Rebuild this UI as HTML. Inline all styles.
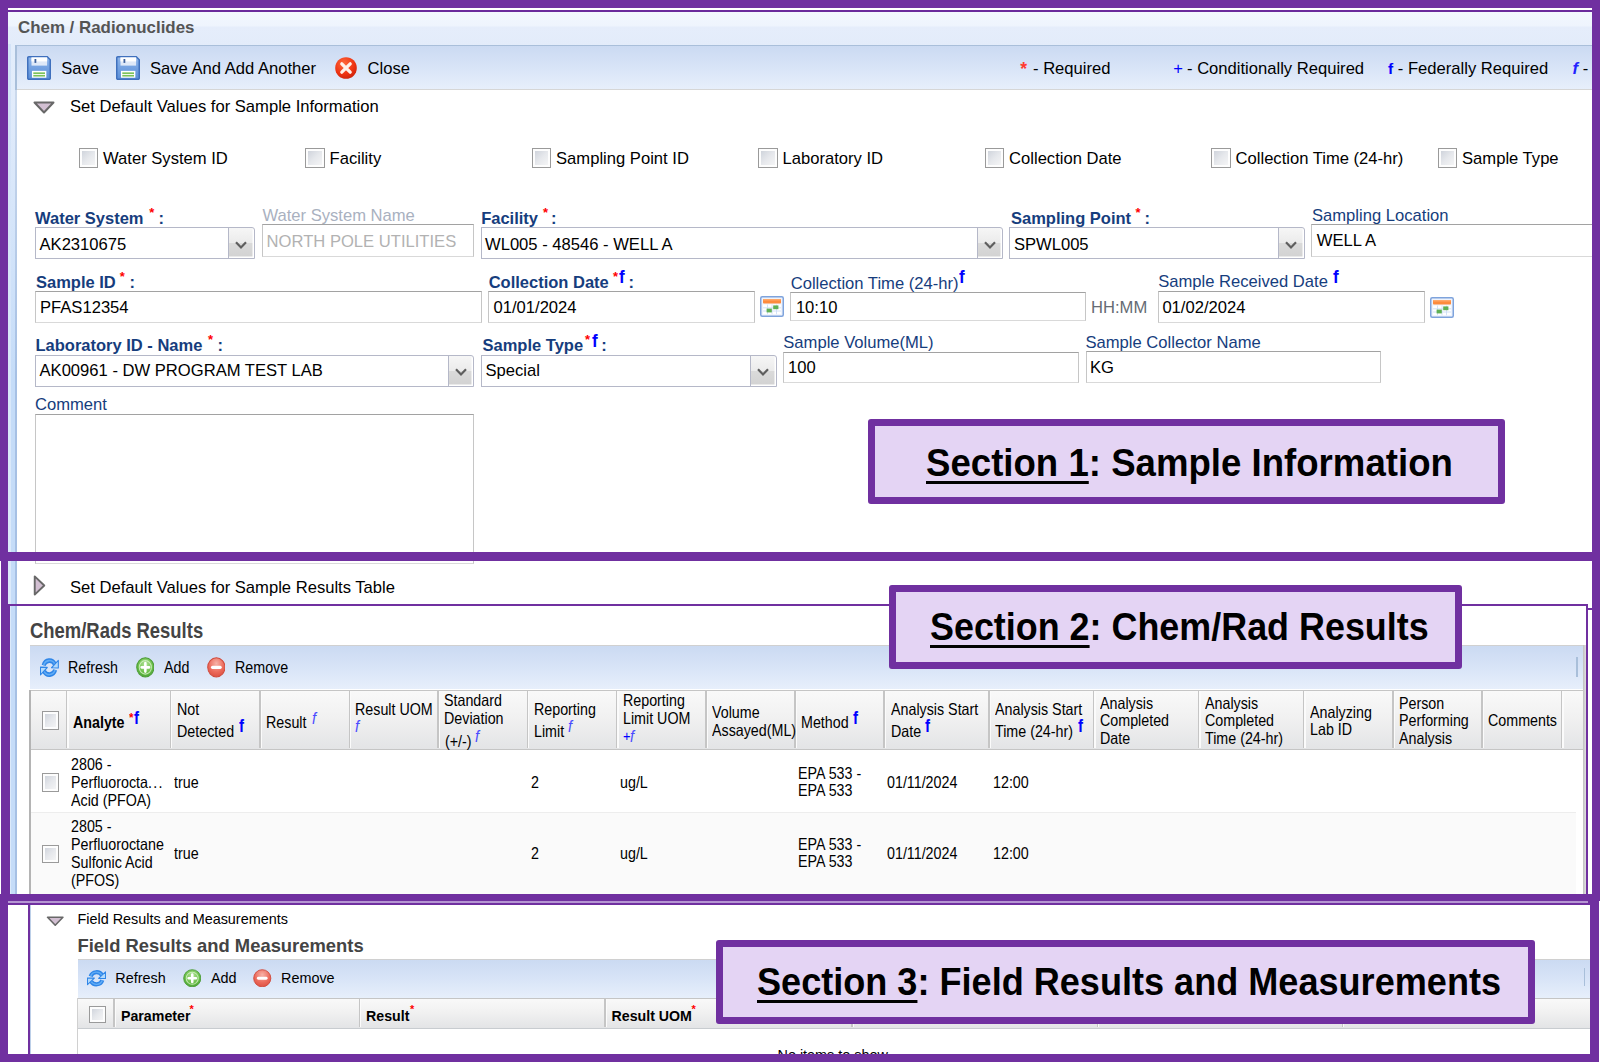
<!DOCTYPE html>
<html lang="en"><head><meta charset="utf-8"><title>Chem / Radionuclides</title><style>
html,body{margin:0;padding:0;background:#fff}
body{width:1600px;height:1062px;position:relative;overflow:hidden;font-family:"Liberation Sans",sans-serif}
.t{position:absolute;white-space:nowrap;font-family:"Liberation Sans",sans-serif}
.r{position:absolute}
.cb{position:absolute;box-sizing:border-box;border:1.500px solid #9a9a9a;background:linear-gradient(135deg,#c9ced7 0,#e6e8ec 50%,#f8f8f8 100%);box-shadow:inset 0 0 0 2px #fdfdfd}
.f{position:absolute;box-sizing:border-box;background:#fff;border:1.500px solid #c6c6c6;border-top-color:#a2a2a2;border-bottom-color:#d9d9d9}
.fc{border-color:#b5b8c8}
.trg{position:absolute;box-sizing:border-box;border:1.500px solid #b5b8c8;border-radius:0 3px 0 0;background:linear-gradient(#f6f6f6 0,#ebebeb 49%,#dadada 51%,#d2d2d2 100%);box-shadow:inset -1.500px -1.500px 0 #fff}
.ul{text-decoration:underline;text-decoration-thickness:3px;text-underline-offset:5px;text-decoration-skip-ink:none}
</style></head><body>
<div class="r" style="left:8.00px;top:12.00px;width:1584.00px;height:33.00px;background:linear-gradient(#f2f7fe 0,#eef4fd 42%,#e5edfb 46%,#e3ecfa 100%);"></div>
<div class="t " style="left:18.00px;top:20px;font-size:16.9px;line-height:16.9px;font-weight:bold;color:#555;">Chem / Radionuclides</div>
<div class="r" style="left:7.50px;top:44.00px;width:8.00px;height:518.00px;background:linear-gradient(#e3edfb 0,#e2ecfb 10%,#c5dcf8 65%,#c5dcf8 100%);"></div>
<div class="r" style="left:7.50px;top:44.00px;width:3.00px;height:518.00px;background:linear-gradient(#d3e3f8 0,#dceafa 100%);"></div>
<div class="r" style="left:15.30px;top:90.00px;width:1.50px;height:472.00px;background:linear-gradient(#cbd9ec 0,#a6c0e4 60%,#a6c0e4 100%);"></div>
<div class="r" style="left:8.00px;top:562.00px;width:7.50px;height:339.00px;background:#c5dcf8;"></div>
<div class="r" style="left:8.00px;top:562.00px;width:3.00px;height:339.00px;background:#dceafa;"></div>
<div class="r" style="left:15.30px;top:562.00px;width:1.50px;height:339.00px;background:#a6c0e4;"></div>
<div class="r" style="left:15.00px;top:44.50px;width:1577.00px;height:45.70px;background:#a9bfda;"></div>
<div class="r" style="left:16.50px;top:46.00px;width:1575.50px;height:42.70px;background:linear-gradient(#cbdaf2 0,#d8e4f7 50%,#e7effb 100%);"></div>
<div class="r" style="left:16.50px;top:88.70px;width:1575.50px;height:1.60px;background:#d6d6d6;"></div>
<svg class="r" style="left:27.2px;top:56px" width="24" height="24" viewBox="0 0 16 16">
<defs><linearGradient id="sv27" x1="0" y1="0" x2="0" y2="1"><stop offset="0" stop-color="#8db4ea"/><stop offset="1" stop-color="#5a8fd8"/></linearGradient></defs>
<path d="M1.2 0.5h12.3l2 2v12.3a.7.7 0 0 1-.7.7H1.2a.7.7 0 0 1-.7-.7V1.2a.7.7 0 0 1 .7-.7z" fill="url(#sv27)" stroke="#3f70bd" stroke-width="1"/>
<rect x="3" y="1" width="10.400" height="5.400" fill="#dfe9f8"/>
<rect x="3" y="1" width="10.400" height="2.600" fill="#ffffff"/>
<rect x="5" y="2" width="1.200" height="2.600" fill="#3b5f9c"/>
<rect x="3.300" y="9.900" width="9.600" height="4.600" fill="#ffffff"/>
<rect x="4.200" y="10.900" width="7.800" height="1.100" fill="#7cc25a"/>
<rect x="4.200" y="12.600" width="7.800" height="1.100" fill="#7cc25a"/>
</svg>
<div class="t " style="left:61.20px;top:61px;font-size:16.6px;line-height:16.6px;color:#000;">Save</div>
<svg class="r" style="left:116.4px;top:56px" width="24" height="24" viewBox="0 0 16 16">
<defs><linearGradient id="sv116" x1="0" y1="0" x2="0" y2="1"><stop offset="0" stop-color="#8db4ea"/><stop offset="1" stop-color="#5a8fd8"/></linearGradient></defs>
<path d="M1.2 0.5h12.3l2 2v12.3a.7.7 0 0 1-.7.7H1.2a.7.7 0 0 1-.7-.7V1.2a.7.7 0 0 1 .7-.7z" fill="url(#sv116)" stroke="#3f70bd" stroke-width="1"/>
<rect x="3" y="1" width="10.400" height="5.400" fill="#dfe9f8"/>
<rect x="3" y="1" width="10.400" height="2.600" fill="#ffffff"/>
<rect x="5" y="2" width="1.200" height="2.600" fill="#3b5f9c"/>
<rect x="3.300" y="9.900" width="9.600" height="4.600" fill="#ffffff"/>
<rect x="4.200" y="10.900" width="7.800" height="1.100" fill="#7cc25a"/>
<rect x="4.200" y="12.600" width="7.800" height="1.100" fill="#7cc25a"/>
</svg>
<div class="t " style="left:150.00px;top:61px;font-size:16.6px;line-height:16.6px;color:#000;">Save And Add Another</div>
<svg class="r" style="left:334.1px;top:56.2px" width="24" height="24" viewBox="-12 -12 24 24">
<defs><radialGradient id="cl" cx="0.4" cy="0.3" r="0.8"><stop offset="0" stop-color="#ff6a3c"/><stop offset="0.6" stop-color="#ee3312"/><stop offset="1" stop-color="#c4200a"/></radialGradient></defs>
<circle r="10.8" fill="url(#cl)"/>
<path d="M-4.200 -4.200L4.200 4.200M4.200 -4.200L-4.200 4.200" stroke="#fff1ea" stroke-width="3.300" stroke-linecap="round"/>
</svg>
<div class="t " style="left:367.60px;top:61px;font-size:16.6px;line-height:16.6px;color:#000;">Close</div>
<div class="t " style="left:1020.30px;top:61px;font-size:17.5px;line-height:17.5px;font-weight:bold;color:#ff3b30;">*</div>
<div class="t " style="left:1033.00px;top:61px;font-size:16.6px;line-height:16.6px;color:#000;">- Required</div>
<div class="t " style="left:1173.20px;top:61px;font-size:16.6px;line-height:16.6px;color:#0000ff;">+</div>
<div class="t " style="left:1187.00px;top:61px;font-size:16.6px;line-height:16.6px;color:#000;">- Conditionally Required</div>
<div class="t " style="left:1388.00px;top:61px;font-size:15.5px;line-height:15.5px;font-weight:bold;color:#0000ff;">f</div>
<div class="t " style="left:1397.80px;top:61px;font-size:16.6px;line-height:16.6px;color:#000;">- Federally Required</div>
<div class="t " style="left:1572.50px;top:61px;font-size:16.6px;line-height:16.6px;color:#000;"><i style="color:#2222ff;font-weight:bold">f</i> -</div>
<svg class="r" style="left:33px;top:101px" width="22" height="13" viewBox="0 0 22 13"><path d="M1.500 1.500H20.500L11 11.500z" fill="#d2bfd2" stroke="#686868" stroke-width="2" stroke-linejoin="round"/></svg>
<div class="t " style="left:70.00px;top:99px;font-size:16.6px;line-height:16.6px;color:#000;">Set Default Values for Sample Information</div>
<div class="cb" style="left:78.75px;top:148.20px;width:19.50px;height:19.50px"></div>
<div class="t " style="left:103.05px;top:151px;font-size:16.6px;line-height:16.6px;color:#000;">Water System ID</div>
<div class="cb" style="left:305.25px;top:148.20px;width:19.50px;height:19.50px"></div>
<div class="t " style="left:329.55px;top:151px;font-size:16.6px;line-height:16.6px;color:#000;">Facility</div>
<div class="cb" style="left:531.75px;top:148.20px;width:19.50px;height:19.50px"></div>
<div class="t " style="left:556.05px;top:151px;font-size:16.6px;line-height:16.6px;color:#000;">Sampling Point ID</div>
<div class="cb" style="left:758.25px;top:148.20px;width:19.50px;height:19.50px"></div>
<div class="t " style="left:782.55px;top:151px;font-size:16.6px;line-height:16.6px;color:#000;">Laboratory ID</div>
<div class="cb" style="left:984.75px;top:148.20px;width:19.50px;height:19.50px"></div>
<div class="t " style="left:1009.05px;top:151px;font-size:16.6px;line-height:16.6px;color:#000;">Collection Date</div>
<div class="cb" style="left:1211.25px;top:148.20px;width:19.50px;height:19.50px"></div>
<div class="t " style="left:1235.55px;top:151px;font-size:16.6px;line-height:16.6px;color:#000;">Collection Time (24-hr)</div>
<div class="cb" style="left:1437.75px;top:148.20px;width:19.50px;height:19.50px"></div>
<div class="t " style="left:1462.05px;top:151px;font-size:16.6px;line-height:16.6px;color:#000;">Sample Type</div>
<div class="t " style="left:35.00px;top:210px;font-size:16.5px;line-height:16.5px;font-weight:bold;color:#163d7d;">Water System</div>
<div class="t " style="left:149.20px;top:206px;font-size:13px;line-height:13px;font-weight:bold;color:#ff0000;">*</div>
<div class="t " style="left:158.50px;top:210px;font-size:16.5px;line-height:16.5px;font-weight:bold;color:#163d7d;">:</div>
<div class="f fc" style="left:35.00px;top:227.40px;width:194.60px;height:32.10px"></div>
<div class="trg" style="left:228.10px;top:227.40px;width:26.5px;height:32.10px"><svg width="14" height="10" viewBox="0 0 14 10" style="position:absolute;left:5px;top:11.55px"><path d="M2 2.200L7 7.400L12 2.200" fill="none" stroke="#5e5e5e" stroke-width="2.200"/></svg></div>
<div class="t " style="left:39.50px;top:237px;font-size:16.6px;line-height:16.6px;color:#000;">AK2310675</div>
<div class="t " style="left:262.40px;top:208px;font-size:16.6px;line-height:16.6px;color:#a9b1bf;">Water System Name</div>
<div class="f " style="left:261.50px;top:224.00px;width:212.50px;height:32.50px"></div>
<div class="t " style="left:266.60px;top:234px;font-size:16.6px;line-height:16.6px;color:#b2b2b2;">NORTH POLE UTILITIES</div>
<div class="t " style="left:481.20px;top:210px;font-size:16.5px;line-height:16.5px;font-weight:bold;color:#163d7d;">Facility</div>
<div class="t " style="left:543.00px;top:206px;font-size:13px;line-height:13px;font-weight:bold;color:#ff0000;">*</div>
<div class="t " style="left:551.00px;top:210px;font-size:16.5px;line-height:16.5px;font-weight:bold;color:#163d7d;">:</div>
<div class="f fc" style="left:480.50px;top:227.40px;width:497.50px;height:32.10px"></div>
<div class="trg" style="left:976.50px;top:227.40px;width:26.5px;height:32.10px"><svg width="14" height="10" viewBox="0 0 14 10" style="position:absolute;left:5px;top:11.55px"><path d="M2 2.200L7 7.400L12 2.200" fill="none" stroke="#5e5e5e" stroke-width="2.200"/></svg></div>
<div class="t " style="left:485.00px;top:237px;font-size:16.6px;line-height:16.6px;color:#000;">WL005 - 48546 - WELL A</div>
<div class="t " style="left:1011.00px;top:210px;font-size:16.5px;line-height:16.5px;font-weight:bold;color:#163d7d;">Sampling Point</div>
<div class="t " style="left:1135.50px;top:206px;font-size:13px;line-height:13px;font-weight:bold;color:#ff0000;">*</div>
<div class="t " style="left:1144.50px;top:210px;font-size:16.5px;line-height:16.5px;font-weight:bold;color:#163d7d;">:</div>
<div class="f fc" style="left:1009.40px;top:227.40px;width:270.10px;height:32.10px"></div>
<div class="trg" style="left:1278.00px;top:227.40px;width:26.5px;height:32.10px"><svg width="14" height="10" viewBox="0 0 14 10" style="position:absolute;left:5px;top:11.55px"><path d="M2 2.200L7 7.400L12 2.200" fill="none" stroke="#5e5e5e" stroke-width="2.200"/></svg></div>
<div class="t " style="left:1013.90px;top:237px;font-size:16.6px;line-height:16.6px;color:#000;">SPWL005</div>
<div class="t " style="left:1312.00px;top:208px;font-size:16.6px;line-height:16.6px;color:#163d7d;">Sampling Location</div>
<div class="f " style="left:1311.20px;top:223.70px;width:288.80px;height:33.00px"></div>
<div class="t " style="left:1316.80px;top:233px;font-size:16.6px;line-height:16.6px;color:#000;">WELL A</div>
<div class="t " style="left:36.00px;top:274px;font-size:16.5px;line-height:16.5px;font-weight:bold;color:#163d7d;">Sample ID</div>
<div class="t " style="left:119.70px;top:270px;font-size:13px;line-height:13px;font-weight:bold;color:#ff0000;">*</div>
<div class="t " style="left:129.50px;top:274px;font-size:16.5px;line-height:16.5px;font-weight:bold;color:#163d7d;">:</div>
<div class="f " style="left:35.00px;top:291.00px;width:446.50px;height:32.00px"></div>
<div class="t " style="left:40.00px;top:300px;font-size:16.6px;line-height:16.6px;color:#000;">PFAS12354</div>
<div class="t " style="left:488.70px;top:274px;font-size:16.5px;line-height:16.5px;font-weight:bold;color:#163d7d;">Collection Date</div>
<div class="t " style="left:613.00px;top:270px;font-size:13px;line-height:13px;font-weight:bold;color:#ff0000;">*</div>
<div class="t " style="left:619.30px;top:268px;font-size:18.5px;line-height:18.5px;font-weight:bold;color:#0000ff;transform:scaleX(0.92);transform-origin:0 0;">f</div>
<div class="t " style="left:628.50px;top:274px;font-size:16.5px;line-height:16.5px;font-weight:bold;color:#163d7d;">:</div>
<div class="f " style="left:488.30px;top:291.00px;width:266.90px;height:32.20px"></div>
<div class="t " style="left:493.50px;top:300px;font-size:16.6px;line-height:16.6px;color:#000;">01/01/2024</div>
<svg class="r" style="left:760.2px;top:296.4px" width="24" height="21" viewBox="0 0 24 21">
<rect x="0.75" y="0.75" width="22.5" height="19.5" rx="1.5" fill="#eef3fc" stroke="#7ea3dc" stroke-width="1.5"/>
<rect x="3" y="3" width="18" height="4.6" rx="0.8" fill="#fd8b3d"/>
<rect x="3" y="3" width="18" height="1.6" rx="0.8" fill="#ffa868"/>
<rect x="3" y="8.6" width="18" height="9.6" fill="#ffffff"/>
<path d="M3 11.8h18M3 15h18M7.5 8.6v9.6M12 8.6v9.6M16.5 8.6v9.6" stroke="#c9dbf5" stroke-width="0.8"/>
<rect x="13.2" y="9.4" width="5.2" height="3.8" fill="#5fb054"/>
<rect x="6.6" y="12.6" width="5.2" height="3.8" fill="#5fb054"/>
</svg>
<div class="t " style="left:790.70px;top:276px;font-size:16.6px;line-height:16.6px;color:#163d7d;">Collection Time (24-hr)</div>
<div class="t " style="left:958.80px;top:268px;font-size:18.5px;line-height:18.5px;font-weight:bold;color:#0000ff;transform:scaleX(0.92);transform-origin:0 0;">f</div>
<div class="f " style="left:790.30px;top:292.40px;width:295.90px;height:29.10px"></div>
<div class="t " style="left:795.90px;top:300px;font-size:16.6px;line-height:16.6px;color:#000;">10:10</div>
<div class="t " style="left:1091.00px;top:300px;font-size:16.6px;line-height:16.6px;color:#666b74;">HH:MM</div>
<div class="t " style="left:1158.20px;top:274px;font-size:16.6px;line-height:16.6px;color:#163d7d;">Sample Received Date</div>
<div class="t " style="left:1332.50px;top:268px;font-size:18.5px;line-height:18.5px;font-weight:bold;color:#0000ff;transform:scaleX(0.92);transform-origin:0 0;">f</div>
<div class="f " style="left:1157.50px;top:290.50px;width:267.00px;height:32.50px"></div>
<div class="t " style="left:1162.40px;top:300px;font-size:16.6px;line-height:16.6px;color:#000;">01/02/2024</div>
<svg class="r" style="left:1429.5px;top:296.6px" width="24" height="21" viewBox="0 0 24 21">
<rect x="0.75" y="0.75" width="22.5" height="19.5" rx="1.5" fill="#eef3fc" stroke="#7ea3dc" stroke-width="1.5"/>
<rect x="3" y="3" width="18" height="4.6" rx="0.8" fill="#fd8b3d"/>
<rect x="3" y="3" width="18" height="1.6" rx="0.8" fill="#ffa868"/>
<rect x="3" y="8.6" width="18" height="9.6" fill="#ffffff"/>
<path d="M3 11.8h18M3 15h18M7.5 8.6v9.6M12 8.6v9.6M16.5 8.6v9.6" stroke="#c9dbf5" stroke-width="0.8"/>
<rect x="13.2" y="9.4" width="5.2" height="3.8" fill="#5fb054"/>
<rect x="6.6" y="12.6" width="5.2" height="3.8" fill="#5fb054"/>
</svg>
<div class="t " style="left:35.50px;top:337px;font-size:16.5px;line-height:16.5px;font-weight:bold;color:#163d7d;">Laboratory ID - Name</div>
<div class="t " style="left:208.00px;top:333px;font-size:13px;line-height:13px;font-weight:bold;color:#ff0000;">*</div>
<div class="t " style="left:217.50px;top:337px;font-size:16.5px;line-height:16.5px;font-weight:bold;color:#163d7d;">:</div>
<div class="f fc" style="left:35.00px;top:355.00px;width:414.00px;height:31.50px"></div>
<div class="trg" style="left:447.50px;top:355.00px;width:26.5px;height:31.50px"><svg width="14" height="10" viewBox="0 0 14 10" style="position:absolute;left:5px;top:11.25px"><path d="M2 2.200L7 7.400L12 2.200" fill="none" stroke="#5e5e5e" stroke-width="2.200"/></svg></div>
<div class="t " style="left:39.50px;top:363px;font-size:16.6px;line-height:16.6px;color:#000;">AK00961 - DW PROGRAM TEST LAB</div>
<div class="t " style="left:482.50px;top:337px;font-size:16.5px;line-height:16.5px;font-weight:bold;color:#163d7d;">Sample Type</div>
<div class="t " style="left:585.00px;top:333px;font-size:13px;line-height:13px;font-weight:bold;color:#ff0000;">*</div>
<div class="t " style="left:592.00px;top:332px;font-size:18.5px;line-height:18.5px;font-weight:bold;color:#0000ff;transform:scaleX(0.92);transform-origin:0 0;">f</div>
<div class="t " style="left:601.20px;top:337px;font-size:16.5px;line-height:16.5px;font-weight:bold;color:#163d7d;">:</div>
<div class="f fc" style="left:481.00px;top:355.00px;width:270.50px;height:31.50px"></div>
<div class="trg" style="left:750.00px;top:355.00px;width:26.5px;height:31.50px"><svg width="14" height="10" viewBox="0 0 14 10" style="position:absolute;left:5px;top:11.25px"><path d="M2 2.200L7 7.400L12 2.200" fill="none" stroke="#5e5e5e" stroke-width="2.200"/></svg></div>
<div class="t " style="left:485.50px;top:363px;font-size:16.6px;line-height:16.6px;color:#000;">Special</div>
<div class="t " style="left:783.30px;top:335px;font-size:16.6px;line-height:16.6px;color:#163d7d;">Sample Volume(ML)</div>
<div class="f " style="left:783.00px;top:352.00px;width:295.70px;height:31.00px"></div>
<div class="t " style="left:788.00px;top:360px;font-size:16.6px;line-height:16.6px;color:#000;">100</div>
<div class="t " style="left:1085.50px;top:335px;font-size:16.6px;line-height:16.6px;color:#163d7d;">Sample Collector Name</div>
<div class="f " style="left:1085.50px;top:351.20px;width:295.10px;height:31.80px"></div>
<div class="t " style="left:1090.00px;top:360px;font-size:16.6px;line-height:16.6px;color:#000;">KG</div>
<div class="t " style="left:35.00px;top:397px;font-size:16.6px;line-height:16.6px;color:#163d7d;">Comment</div>
<div class="f " style="left:35.00px;top:413.50px;width:439.00px;height:150.50px"></div>
<svg class="r" style="left:33px;top:575px" width="13" height="21" viewBox="0 0 13 22"><path d="M1.500 1.500V20.500L11.500 11z" fill="#d2bfd2" stroke="#686868" stroke-width="2" stroke-linejoin="round"/></svg>
<div class="t " style="left:70.00px;top:580px;font-size:16.6px;line-height:16.6px;color:#000;">Set Default Values for Sample Results Table</div>
<div class="t " style="left:30.30px;top:620px;font-size:21.7px;line-height:21.7px;font-weight:bold;color:#444;transform:scaleX(0.85);transform-origin:0 0;">Chem/Rads Results</div>
<div class="r" style="left:30.00px;top:645.30px;width:1554.00px;height:44.20px;background:linear-gradient(#cbdaf2 0,#d8e4f7 50%,#e7effb 100%);border-top:1px solid #d0d0d0;box-sizing:border-box"></div>
<svg class="r" style="left:39.8px;top:656.8px" width="18.8" height="21.2" viewBox="0 0 16 16" preserveAspectRatio="none">
<path d="M3.100 6.300A5.200 5.200 0 0 1 12.600 5.400" fill="none" stroke="#2f86e8" stroke-width="3.500" stroke-linecap="butt"/>
<path d="M3.100 6.300A5.200 5.200 0 0 1 12.600 5.400" fill="none" stroke="#62adf5" stroke-width="1.200"/>
<path d="M15.600 2.500V8.300L9.800 8.100z" fill="#b4dbfc" stroke="#2f86e8" stroke-width="0.900" stroke-linejoin="round"/>
<path d="M12.900 9.700A5.200 5.200 0 0 1 3.400 10.600" fill="none" stroke="#2f86e8" stroke-width="3.500"/>
<path d="M12.900 9.700A5.200 5.200 0 0 1 3.400 10.600" fill="none" stroke="#62adf5" stroke-width="1.200"/>
<path d="M0.400 13.500V7.700L6.200 7.900z" fill="#b4dbfc" stroke="#2f86e8" stroke-width="0.900" stroke-linejoin="round"/>
</svg>
<div class="t " style="left:68.40px;top:659px;font-size:16.5px;line-height:16.5px;color:#000;transform:scaleX(0.865);transform-origin:0 0;">Refresh</div>
<svg class="r" style="left:135.5px;top:657px" width="18.7" height="20.7" viewBox="-8 -8 16 16" preserveAspectRatio="none">
<defs><radialGradient id="ada" cx="0.5" cy="0.35" r="0.75"><stop offset="0" stop-color="#b4e39a"/><stop offset="0.55" stop-color="#6cc04a"/><stop offset="1" stop-color="#3f9a2e"/></radialGradient></defs>
<circle r="7.4" fill="url(#ada)" stroke="#4c9c38" stroke-width="0.8"/>
<circle r="5.2" fill="none" stroke="#d8f2cb" stroke-width="0.9" opacity="0.8"/>
<path d="M-3.200 0H3.200M0 -3.200V3.200" stroke="#fff" stroke-width="2.200" stroke-linecap="round"/>
</svg>
<div class="t " style="left:164.00px;top:659px;font-size:16.5px;line-height:16.5px;color:#000;transform:scaleX(0.865);transform-origin:0 0;">Add</div>
<svg class="r" style="left:206.6px;top:657px" width="18.7" height="20.7" viewBox="-8 -8 16 16" preserveAspectRatio="none">
<defs><radialGradient id="rma" cx="0.5" cy="0.3" r="0.8"><stop offset="0" stop-color="#f7b3a8"/><stop offset="0.55" stop-color="#ec6a5b"/><stop offset="1" stop-color="#d8493b"/></radialGradient></defs>
<circle r="7.4" fill="url(#rma)" stroke="#d04a3c" stroke-width="0.8"/>
<path d="M-3.400 0H3.400" stroke="#fff" stroke-width="2.400" stroke-linecap="round"/>
</svg>
<div class="t " style="left:234.70px;top:659px;font-size:16.5px;line-height:16.5px;color:#000;transform:scaleX(0.865);transform-origin:0 0;">Remove</div>
<div class="r" style="left:1576.00px;top:657.00px;width:1.50px;height:20.00px;background:#a9bfda;"></div>
<div class="r" style="left:30.40px;top:689.50px;width:1553.60px;height:60.00px;background:linear-gradient(#f9f9f9 0,#f1f1f1 45%,#e3e4e6 100%);border-top:1.5px solid #c5c5c5;border-bottom:1.5px solid #c5c5c5;box-sizing:border-box"></div>
<div class="r" style="left:65.75px;top:691.00px;width:1.50px;height:57.00px;background:#c5c5c5;"></div>
<div class="r" style="left:67.25px;top:691.00px;width:1.25px;height:57.00px;background:#fbfbfb;"></div>
<div class="r" style="left:169.65px;top:691.00px;width:1.50px;height:57.00px;background:#c5c5c5;"></div>
<div class="r" style="left:171.15px;top:691.00px;width:1.25px;height:57.00px;background:#fbfbfb;"></div>
<div class="r" style="left:259.15px;top:691.00px;width:1.50px;height:57.00px;background:#c5c5c5;"></div>
<div class="r" style="left:260.65px;top:691.00px;width:1.25px;height:57.00px;background:#fbfbfb;"></div>
<div class="r" style="left:348.55px;top:691.00px;width:1.50px;height:57.00px;background:#c5c5c5;"></div>
<div class="r" style="left:350.05px;top:691.00px;width:1.25px;height:57.00px;background:#fbfbfb;"></div>
<div class="r" style="left:437.25px;top:691.00px;width:1.50px;height:57.00px;background:#c5c5c5;"></div>
<div class="r" style="left:438.75px;top:691.00px;width:1.25px;height:57.00px;background:#fbfbfb;"></div>
<div class="r" style="left:526.65px;top:691.00px;width:1.50px;height:57.00px;background:#c5c5c5;"></div>
<div class="r" style="left:528.15px;top:691.00px;width:1.25px;height:57.00px;background:#fbfbfb;"></div>
<div class="r" style="left:615.85px;top:691.00px;width:1.50px;height:57.00px;background:#c5c5c5;"></div>
<div class="r" style="left:617.35px;top:691.00px;width:1.25px;height:57.00px;background:#fbfbfb;"></div>
<div class="r" style="left:705.05px;top:691.00px;width:1.50px;height:57.00px;background:#c5c5c5;"></div>
<div class="r" style="left:706.55px;top:691.00px;width:1.25px;height:57.00px;background:#fbfbfb;"></div>
<div class="r" style="left:794.25px;top:691.00px;width:1.50px;height:57.00px;background:#c5c5c5;"></div>
<div class="r" style="left:795.75px;top:691.00px;width:1.25px;height:57.00px;background:#fbfbfb;"></div>
<div class="r" style="left:883.25px;top:691.00px;width:1.50px;height:57.00px;background:#c5c5c5;"></div>
<div class="r" style="left:884.75px;top:691.00px;width:1.25px;height:57.00px;background:#fbfbfb;"></div>
<div class="r" style="left:988.25px;top:691.00px;width:1.50px;height:57.00px;background:#c5c5c5;"></div>
<div class="r" style="left:989.75px;top:691.00px;width:1.25px;height:57.00px;background:#fbfbfb;"></div>
<div class="r" style="left:1092.75px;top:691.00px;width:1.50px;height:57.00px;background:#c5c5c5;"></div>
<div class="r" style="left:1094.25px;top:691.00px;width:1.25px;height:57.00px;background:#fbfbfb;"></div>
<div class="r" style="left:1197.75px;top:691.00px;width:1.50px;height:57.00px;background:#c5c5c5;"></div>
<div class="r" style="left:1199.25px;top:691.00px;width:1.25px;height:57.00px;background:#fbfbfb;"></div>
<div class="r" style="left:1302.75px;top:691.00px;width:1.50px;height:57.00px;background:#c5c5c5;"></div>
<div class="r" style="left:1304.25px;top:691.00px;width:1.25px;height:57.00px;background:#fbfbfb;"></div>
<div class="r" style="left:1392.05px;top:691.00px;width:1.50px;height:57.00px;background:#c5c5c5;"></div>
<div class="r" style="left:1393.55px;top:691.00px;width:1.25px;height:57.00px;background:#fbfbfb;"></div>
<div class="r" style="left:1481.25px;top:691.00px;width:1.50px;height:57.00px;background:#c5c5c5;"></div>
<div class="r" style="left:1482.75px;top:691.00px;width:1.25px;height:57.00px;background:#fbfbfb;"></div>
<div class="r" style="left:1560.75px;top:691.00px;width:1.50px;height:57.00px;background:#c5c5c5;"></div>
<div class="r" style="left:1562.25px;top:691.00px;width:1.25px;height:57.00px;background:#fbfbfb;"></div>
<div class="r" style="left:29.40px;top:689.50px;width:1.50px;height:204.50px;background:#b4b4b4;"></div>
<div class="r" style="left:1583.00px;top:645.00px;width:2.50px;height:249.00px;background:linear-gradient(90deg,#c0c0c0,#e0e0e0);"></div>
<div class="cb" style="left:41.50px;top:710.50px;width:17.00px;height:19.00px"></div>
<div class="t " style="left:73.00px;top:714px;font-size:16.5px;line-height:16.5px;font-weight:bold;color:#000;transform:scaleX(0.865);transform-origin:0 0;">Analyte</div>
<div class="t " style="left:129.00px;top:711px;font-size:13px;line-height:13px;font-weight:bold;color:#ff0000;transform:scaleX(0.9);transform-origin:0 0;">*</div>
<div class="t " style="left:134.30px;top:710px;font-size:17.5px;line-height:17.5px;font-weight:bold;color:#0000ff;transform:scaleX(0.86);transform-origin:0 0;">f</div>
<div class="t " style="left:177.10px;top:701px;font-size:16.5px;line-height:16.5px;color:#000;transform:scaleX(0.865);transform-origin:0 0;">Not</div>
<div class="t " style="left:177.10px;top:723px;font-size:16.5px;line-height:16.5px;color:#000;transform:scaleX(0.865);transform-origin:0 0;">Detected</div>
<div class="t " style="left:239.00px;top:718px;font-size:17.5px;line-height:17.5px;font-weight:bold;color:#0000ff;transform:scaleX(0.86);transform-origin:0 0;">f</div>
<div class="t " style="left:266.00px;top:714px;font-size:16.5px;line-height:16.5px;color:#000;transform:scaleX(0.865);transform-origin:0 0;">Result</div>
<div class="t " style="left:311.50px;top:710px;font-size:17px;line-height:17px;color:#4a4aff;transform:scaleX(0.86);transform-origin:0 0;"><i>f</i></div>
<div class="t " style="left:355.40px;top:701px;font-size:16.5px;line-height:16.5px;color:#000;transform:scaleX(0.865);transform-origin:0 0;">Result UOM</div>
<div class="t " style="left:355.00px;top:718px;font-size:17px;line-height:17px;color:#4a4aff;transform:scaleX(0.86);transform-origin:0 0;"><i>f</i></div>
<div class="t " style="left:444.30px;top:692px;font-size:16.5px;line-height:16.5px;color:#000;transform:scaleX(0.865);transform-origin:0 0;">Standard</div>
<div class="t " style="left:444.30px;top:710px;font-size:16.5px;line-height:16.5px;color:#000;transform:scaleX(0.865);transform-origin:0 0;">Deviation</div>
<div class="t " style="left:444.80px;top:733px;font-size:16.5px;line-height:16.5px;color:#000;transform:scaleX(0.865);transform-origin:0 0;">(+/-)</div>
<div class="t " style="left:475.20px;top:728px;font-size:17px;line-height:17px;color:#4a4aff;transform:scaleX(0.86);transform-origin:0 0;"><i>f</i></div>
<div class="t " style="left:533.80px;top:701px;font-size:16.5px;line-height:16.5px;color:#000;transform:scaleX(0.865);transform-origin:0 0;">Reporting</div>
<div class="t " style="left:533.80px;top:723px;font-size:16.5px;line-height:16.5px;color:#000;transform:scaleX(0.865);transform-origin:0 0;">Limit</div>
<div class="t " style="left:568.10px;top:718px;font-size:17px;line-height:17px;color:#4a4aff;transform:scaleX(0.86);transform-origin:0 0;"><i>f</i></div>
<div class="t " style="left:623.30px;top:692px;font-size:16.5px;line-height:16.5px;color:#000;transform:scaleX(0.865);transform-origin:0 0;">Reporting</div>
<div class="t " style="left:623.30px;top:710px;font-size:16.5px;line-height:16.5px;color:#000;transform:scaleX(0.865);transform-origin:0 0;">Limit UOM</div>
<div class="t " style="left:622.50px;top:728px;font-size:15px;line-height:15px;color:#0000ff;transform:scaleX(0.86);transform-origin:0 0;">+</div>
<div class="t " style="left:629.50px;top:728px;font-size:17px;line-height:17px;color:#4a4aff;transform:scaleX(0.86);transform-origin:0 0;"><i>f</i></div>
<div class="t " style="left:712.00px;top:704px;font-size:16.5px;line-height:16.5px;color:#000;transform:scaleX(0.865);transform-origin:0 0;">Volume</div>
<div class="t " style="left:712.00px;top:722px;font-size:16.5px;line-height:16.5px;color:#000;transform:scaleX(0.865);transform-origin:0 0;">Assayed(ML)</div>
<div class="t " style="left:801.00px;top:714px;font-size:16.5px;line-height:16.5px;color:#000;transform:scaleX(0.865);transform-origin:0 0;">Method</div>
<div class="t " style="left:853.30px;top:710px;font-size:17.5px;line-height:17.5px;font-weight:bold;color:#0000ff;transform:scaleX(0.86);transform-origin:0 0;">f</div>
<div class="t " style="left:890.50px;top:701px;font-size:16.5px;line-height:16.5px;color:#000;transform:scaleX(0.865);transform-origin:0 0;">Analysis Start</div>
<div class="t " style="left:890.50px;top:723px;font-size:16.5px;line-height:16.5px;color:#000;transform:scaleX(0.865);transform-origin:0 0;">Date</div>
<div class="t " style="left:925.00px;top:718px;font-size:17.5px;line-height:17.5px;font-weight:bold;color:#0000ff;transform:scaleX(0.86);transform-origin:0 0;">f</div>
<div class="t " style="left:995.00px;top:701px;font-size:16.5px;line-height:16.5px;color:#000;transform:scaleX(0.865);transform-origin:0 0;">Analysis Start</div>
<div class="t " style="left:995.00px;top:723px;font-size:16.5px;line-height:16.5px;color:#000;transform:scaleX(0.865);transform-origin:0 0;">Time (24-hr)</div>
<div class="t " style="left:1077.80px;top:718px;font-size:17.5px;line-height:17.5px;font-weight:bold;color:#0000ff;transform:scaleX(0.86);transform-origin:0 0;">f</div>
<div class="t " style="left:1100.30px;top:695px;font-size:16.5px;line-height:16.5px;color:#000;transform:scaleX(0.865);transform-origin:0 0;">Analysis</div>
<div class="t " style="left:1100.30px;top:712px;font-size:16.5px;line-height:16.5px;color:#000;transform:scaleX(0.865);transform-origin:0 0;">Completed</div>
<div class="t " style="left:1100.30px;top:730px;font-size:16.5px;line-height:16.5px;color:#000;transform:scaleX(0.865);transform-origin:0 0;">Date</div>
<div class="t " style="left:1205.00px;top:695px;font-size:16.5px;line-height:16.5px;color:#000;transform:scaleX(0.865);transform-origin:0 0;">Analysis</div>
<div class="t " style="left:1205.00px;top:712px;font-size:16.5px;line-height:16.5px;color:#000;transform:scaleX(0.865);transform-origin:0 0;">Completed</div>
<div class="t " style="left:1205.00px;top:730px;font-size:16.5px;line-height:16.5px;color:#000;transform:scaleX(0.865);transform-origin:0 0;">Time (24-hr)</div>
<div class="t " style="left:1309.75px;top:704px;font-size:16.5px;line-height:16.5px;color:#000;transform:scaleX(0.865);transform-origin:0 0;">Analyzing</div>
<div class="t " style="left:1309.75px;top:721px;font-size:16.5px;line-height:16.5px;color:#000;transform:scaleX(0.865);transform-origin:0 0;">Lab ID</div>
<div class="t " style="left:1399.00px;top:695px;font-size:16.5px;line-height:16.5px;color:#000;transform:scaleX(0.865);transform-origin:0 0;">Person</div>
<div class="t " style="left:1399.00px;top:712px;font-size:16.5px;line-height:16.5px;color:#000;transform:scaleX(0.865);transform-origin:0 0;">Performing</div>
<div class="t " style="left:1399.00px;top:730px;font-size:16.5px;line-height:16.5px;color:#000;transform:scaleX(0.865);transform-origin:0 0;">Analysis</div>
<div class="t " style="left:1488.00px;top:712px;font-size:16.5px;line-height:16.5px;color:#000;transform:scaleX(0.865);transform-origin:0 0;">Comments</div>
<div class="r" style="left:31.00px;top:750.00px;width:1545.00px;height:61.60px;background:#fff;"></div>
<div class="r" style="left:31.00px;top:811.60px;width:1545.00px;height:82.40px;background:#fafafa;border-top:1px solid #ededed;box-sizing:border-box"></div>
<div class="cb" style="left:41.50px;top:773.30px;width:17.00px;height:18.50px"></div>
<div class="cb" style="left:41.50px;top:844.50px;width:17.00px;height:18.90px"></div>
<div class="t " style="left:70.50px;top:756px;font-size:16.5px;line-height:16.5px;color:#000;transform:scaleX(0.865);transform-origin:0 0;">2806 -</div>
<div class="t " style="left:70.50px;top:774px;font-size:16.5px;line-height:16.5px;color:#000;transform:scaleX(0.865);transform-origin:0 0;">Perfluorocta<span style="letter-spacing:1.500px">...</span></div>
<div class="t " style="left:70.50px;top:792px;font-size:16.5px;line-height:16.5px;color:#000;transform:scaleX(0.865);transform-origin:0 0;">Acid (PFOA)</div>
<div class="t " style="left:70.50px;top:818px;font-size:16.5px;line-height:16.5px;color:#000;transform:scaleX(0.865);transform-origin:0 0;">2805 -</div>
<div class="t " style="left:70.50px;top:836px;font-size:16.5px;line-height:16.5px;color:#000;transform:scaleX(0.865);transform-origin:0 0;">Perfluoroctane</div>
<div class="t " style="left:70.50px;top:854px;font-size:16.5px;line-height:16.5px;color:#000;transform:scaleX(0.865);transform-origin:0 0;">Sulfonic Acid</div>
<div class="t " style="left:70.50px;top:872px;font-size:16.5px;line-height:16.5px;color:#000;transform:scaleX(0.865);transform-origin:0 0;">(PFOS)</div>
<div class="t " style="left:174.30px;top:774px;font-size:16.5px;line-height:16.5px;color:#000;transform:scaleX(0.865);transform-origin:0 0;">true</div>
<div class="t " style="left:530.80px;top:774px;font-size:16.5px;line-height:16.5px;color:#000;transform:scaleX(0.865);transform-origin:0 0;">2</div>
<div class="t " style="left:619.60px;top:774px;font-size:16.5px;line-height:16.5px;color:#000;transform:scaleX(0.865);transform-origin:0 0;">ug/L</div>
<div class="t " style="left:798.40px;top:765px;font-size:16.5px;line-height:16.5px;color:#000;transform:scaleX(0.865);transform-origin:0 0;">EPA 533 -</div>
<div class="t " style="left:798.40px;top:782px;font-size:16.5px;line-height:16.5px;color:#000;transform:scaleX(0.865);transform-origin:0 0;">EPA 533</div>
<div class="t " style="left:887.20px;top:774px;font-size:16.5px;line-height:16.5px;color:#000;transform:scaleX(0.865);transform-origin:0 0;">01/11/2024</div>
<div class="t " style="left:992.50px;top:774px;font-size:16.5px;line-height:16.5px;color:#000;transform:scaleX(0.865);transform-origin:0 0;">12:00</div>
<div class="t " style="left:174.30px;top:845px;font-size:16.5px;line-height:16.5px;color:#000;transform:scaleX(0.865);transform-origin:0 0;">true</div>
<div class="t " style="left:530.80px;top:845px;font-size:16.5px;line-height:16.5px;color:#000;transform:scaleX(0.865);transform-origin:0 0;">2</div>
<div class="t " style="left:619.60px;top:845px;font-size:16.5px;line-height:16.5px;color:#000;transform:scaleX(0.865);transform-origin:0 0;">ug/L</div>
<div class="t " style="left:798.40px;top:836px;font-size:16.5px;line-height:16.5px;color:#000;transform:scaleX(0.865);transform-origin:0 0;">EPA 533 -</div>
<div class="t " style="left:798.40px;top:853px;font-size:16.5px;line-height:16.5px;color:#000;transform:scaleX(0.865);transform-origin:0 0;">EPA 533</div>
<div class="t " style="left:887.20px;top:845px;font-size:16.5px;line-height:16.5px;color:#000;transform:scaleX(0.865);transform-origin:0 0;">01/11/2024</div>
<div class="t " style="left:992.50px;top:845px;font-size:16.5px;line-height:16.5px;color:#000;transform:scaleX(0.865);transform-origin:0 0;">12:00</div>
<svg class="r" style="left:45.6px;top:915.5px" width="18.5" height="10.5" viewBox="0 0 22 13"><path d="M1.500 1.500H20.500L11 11.500z" fill="#d2bfd2" stroke="#686868" stroke-width="2" stroke-linejoin="round"/></svg>
<div class="t " style="left:77.50px;top:912px;font-size:14.4px;line-height:14.4px;color:#000;">Field Results and Measurements</div>
<div class="t " style="left:77.50px;top:937px;font-size:18.4px;line-height:18.4px;font-weight:bold;color:#444;">Field Results and Measurements</div>
<div class="r" style="left:77.50px;top:959.00px;width:1512.50px;height:38.50px;background:linear-gradient(#cbdaf2 0,#d8e4f7 50%,#e7effb 100%);border-top:1px solid #d0d0d0;box-sizing:border-box"></div>
<svg class="r" style="left:87px;top:968.5px" width="19" height="18.5" viewBox="0 0 16 16" preserveAspectRatio="none">
<path d="M3.100 6.300A5.200 5.200 0 0 1 12.600 5.400" fill="none" stroke="#2f86e8" stroke-width="3.500" stroke-linecap="butt"/>
<path d="M3.100 6.300A5.200 5.200 0 0 1 12.600 5.400" fill="none" stroke="#62adf5" stroke-width="1.200"/>
<path d="M15.600 2.500V8.300L9.800 8.100z" fill="#b4dbfc" stroke="#2f86e8" stroke-width="0.900" stroke-linejoin="round"/>
<path d="M12.900 9.700A5.200 5.200 0 0 1 3.400 10.600" fill="none" stroke="#2f86e8" stroke-width="3.500"/>
<path d="M12.900 9.700A5.200 5.200 0 0 1 3.400 10.600" fill="none" stroke="#62adf5" stroke-width="1.200"/>
<path d="M0.400 13.500V7.700L6.200 7.900z" fill="#b4dbfc" stroke="#2f86e8" stroke-width="0.900" stroke-linejoin="round"/>
</svg>
<div class="t " style="left:115.30px;top:971px;font-size:14.4px;line-height:14.4px;color:#000;">Refresh</div>
<svg class="r" style="left:182.5px;top:968.5px" width="18.5" height="18.5" viewBox="-8 -8 16 16" preserveAspectRatio="none">
<defs><radialGradient id="adb" cx="0.5" cy="0.35" r="0.75"><stop offset="0" stop-color="#b4e39a"/><stop offset="0.55" stop-color="#6cc04a"/><stop offset="1" stop-color="#3f9a2e"/></radialGradient></defs>
<circle r="7.4" fill="url(#adb)" stroke="#4c9c38" stroke-width="0.8"/>
<circle r="5.2" fill="none" stroke="#d8f2cb" stroke-width="0.9" opacity="0.8"/>
<path d="M-3.200 0H3.200M0 -3.200V3.200" stroke="#fff" stroke-width="2.200" stroke-linecap="round"/>
</svg>
<div class="t " style="left:211.00px;top:971px;font-size:14.4px;line-height:14.4px;color:#000;">Add</div>
<svg class="r" style="left:253px;top:968.5px" width="18.5" height="18.5" viewBox="-8 -8 16 16" preserveAspectRatio="none">
<defs><radialGradient id="rmb" cx="0.5" cy="0.3" r="0.8"><stop offset="0" stop-color="#f7b3a8"/><stop offset="0.55" stop-color="#ec6a5b"/><stop offset="1" stop-color="#d8493b"/></radialGradient></defs>
<circle r="7.4" fill="url(#rmb)" stroke="#d04a3c" stroke-width="0.8"/>
<path d="M-3.400 0H3.400" stroke="#fff" stroke-width="2.400" stroke-linecap="round"/>
</svg>
<div class="t " style="left:281.00px;top:971px;font-size:14.4px;line-height:14.4px;color:#000;">Remove</div>
<div class="r" style="left:1584.00px;top:968.00px;width:1.30px;height:18.00px;background:#a9bfda;"></div>
<div class="r" style="left:77.50px;top:997.50px;width:1512.50px;height:31.00px;background:linear-gradient(#f9f9f9 0,#f1f1f1 45%,#e3e4e6 100%);border-top:1.5px solid #c5c5c5;border-bottom:1.5px solid #c8ccd0;box-sizing:border-box"></div>
<div class="r" style="left:113.35px;top:999.00px;width:1.30px;height:28.00px;background:#c5c5c5;"></div>
<div class="r" style="left:114.65px;top:999.00px;width:1.15px;height:28.00px;background:#fbfbfb;"></div>
<div class="r" style="left:358.85px;top:999.00px;width:1.30px;height:28.00px;background:#c5c5c5;"></div>
<div class="r" style="left:360.15px;top:999.00px;width:1.15px;height:28.00px;background:#fbfbfb;"></div>
<div class="r" style="left:604.35px;top:999.00px;width:1.30px;height:28.00px;background:#c5c5c5;"></div>
<div class="r" style="left:605.65px;top:999.00px;width:1.15px;height:28.00px;background:#fbfbfb;"></div>
<div class="r" style="left:851.35px;top:999.00px;width:1.30px;height:28.00px;background:#c5c5c5;"></div>
<div class="r" style="left:852.65px;top:999.00px;width:1.15px;height:28.00px;background:#fbfbfb;"></div>
<div class="r" style="left:1096.85px;top:999.00px;width:1.30px;height:28.00px;background:#c5c5c5;"></div>
<div class="r" style="left:1098.15px;top:999.00px;width:1.15px;height:28.00px;background:#fbfbfb;"></div>
<div class="r" style="left:1341.85px;top:999.00px;width:1.30px;height:28.00px;background:#c5c5c5;"></div>
<div class="r" style="left:1343.15px;top:999.00px;width:1.15px;height:28.00px;background:#fbfbfb;"></div>
<div class="r" style="left:77.00px;top:997.50px;width:1.30px;height:64.50px;background:#d0d0d0;"></div>
<div class="cb" style="left:89.00px;top:1006.00px;width:17.00px;height:16.50px"></div>
<div class="t " style="left:121.00px;top:1009px;font-size:14.2px;line-height:14.2px;font-weight:bold;color:#000;">Parameter</div>
<div class="t " style="left:189.50px;top:1004px;font-size:11px;line-height:11px;font-weight:bold;color:#ff0000;">*</div>
<div class="t " style="left:366.00px;top:1009px;font-size:14.2px;line-height:14.2px;font-weight:bold;color:#000;">Result</div>
<div class="t " style="left:410.00px;top:1004px;font-size:11px;line-height:11px;font-weight:bold;color:#ff0000;">*</div>
<div class="t " style="left:611.50px;top:1009px;font-size:14.2px;line-height:14.2px;font-weight:bold;color:#000;">Result UOM</div>
<div class="t " style="left:691.50px;top:1004px;font-size:11px;line-height:11px;font-weight:bold;color:#ff0000;">*</div>
<div class="t " style="left:777.50px;top:1048px;font-size:14.4px;line-height:14.4px;color:#000;">No items to show</div>
<div class="r" style="left:0.00px;top:0.00px;width:1600.00px;height:7.60px;background:#7030a0;"></div>
<div class="r" style="left:7.60px;top:10.00px;width:1584.40px;height:2.00px;background:#6a2a9c;"></div>
<div class="r" style="left:0.00px;top:0.00px;width:8.00px;height:561.30px;background:#7030a0;"></div>
<div class="r" style="left:1592.00px;top:0.00px;width:8.00px;height:901.00px;background:#7030a0;"></div>
<div class="r" style="left:0.00px;top:552.00px;width:1600.00px;height:9.30px;background:#7030a0;"></div>
<div class="r" style="left:1.00px;top:561.30px;width:7.30px;height:43.70px;background:#7030a0;"></div>
<div class="r" style="left:1.00px;top:604.00px;width:8.90px;height:297.00px;background:#7030a0;"></div>
<div class="r" style="left:8.00px;top:604.00px;width:1580.20px;height:2.20px;background:#7030a0;"></div>
<div class="r" style="left:1586.30px;top:604.00px;width:1.90px;height:291.00px;background:#7030a0;"></div>
<div class="r" style="left:1588.00px;top:608.40px;width:4.40px;height:1.20px;background:#7030a0;"></div>
<div class="r" style="left:0.00px;top:893.80px;width:1600.00px;height:7.00px;background:#7030a0;"></div>
<div class="r" style="left:7.60px;top:900.70px;width:1580.60px;height:2.30px;background:#b596d2;"></div>
<div class="r" style="left:7.60px;top:903.00px;width:1582.40px;height:1.60px;background:#7030a0;"></div>
<div class="r" style="left:1588.20px;top:900.70px;width:1.80px;height:2.30px;background:#7030a0;"></div>
<div class="r" style="left:0.00px;top:900.80px;width:7.60px;height:161.20px;background:#7030a0;"></div>
<div class="r" style="left:28.00px;top:903.00px;width:2.10px;height:159.00px;background:#7030a0;"></div>
<div class="r" style="left:30.10px;top:904.60px;width:1.20px;height:149.40px;background:#bccfe8;"></div>
<div class="r" style="left:1590.00px;top:900.80px;width:9.00px;height:161.20px;background:#7030a0;"></div>
<div class="r" style="left:0.00px;top:1054.30px;width:1599.00px;height:7.70px;background:#7030a0;"></div>
<div class="r" style="left:867.50px;top:419.00px;width:637.50px;height:84.50px;background:#e4d4f4;border:7.600px solid #7030a0;border-radius:3px;box-sizing:border-box"></div>
<div class="t " style="left:926.30px;top:444px;font-size:38.4px;line-height:38.4px;font-weight:bold;color:#000;transform:scaleX(0.9536);transform-origin:0 0;"><span class="ul">Section 1</span>: Sample Information</div>
<div class="r" style="left:889.00px;top:585.00px;width:573.00px;height:84.40px;background:#e4d4f4;border:7.600px solid #7030a0;border-radius:3px;box-sizing:border-box"></div>
<div class="t " style="left:929.80px;top:608px;font-size:38.4px;line-height:38.4px;font-weight:bold;color:#000;transform:scaleX(0.935);transform-origin:0 0;"><span class="ul">Section 2</span>: Chem/Rad Results</div>
<div class="r" style="left:716.20px;top:939.50px;width:818.50px;height:84.80px;background:#e4d4f4;border:7.600px solid #7030a0;border-radius:3px;box-sizing:border-box"></div>
<div class="t " style="left:757.00px;top:963px;font-size:38.4px;line-height:38.4px;font-weight:bold;color:#000;transform:scaleX(0.94);transform-origin:0 0;"><span class="ul">Section 3</span>: Field Results and Measurements</div>
</body></html>
